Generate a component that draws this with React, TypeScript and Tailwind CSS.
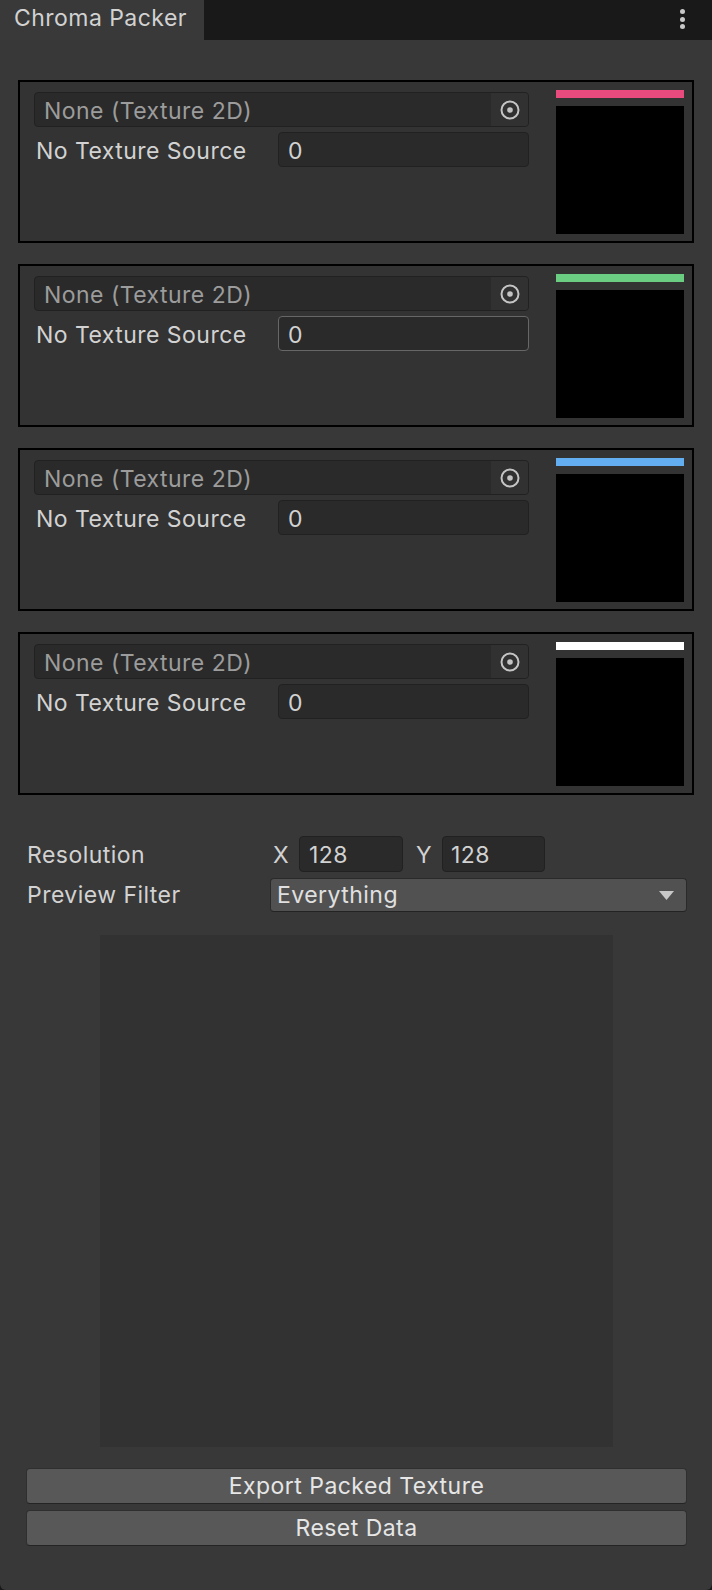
import React from 'react'

const CHANNELS = [
  { id: 'r', color: 'bg-[#e94b7f]', focused: false },
  { id: 'g', color: 'bg-[#6acd82]', focused: true },
  { id: 'b', color: 'bg-[#63aef0]', focused: false },
  { id: 'a', color: 'bg-white', focused: false },
]

const TXT = 'text-[23px] tracking-[0.02em]'

function PickerIcon() {
  return (
    <svg width="22" height="22" viewBox="0 0 22 22">
      <circle cx="11" cy="11" r="8.5" fill="none" stroke="#c4c4c4" strokeWidth="2" />
      <circle cx="11" cy="11" r="2.8" fill="#c4c4c4" />
    </svg>
  )
}

function ChannelCard({ color, focused }: { color: string; focused: boolean }) {
  return (
    <div className="flex h-[163px] border-2 border-black bg-[#333333]">
      <div className="flex-1 flex flex-col gap-[5px] pl-[14px] pt-[10px]">
        <div className="flex h-[35px] items-stretch rounded-[4px] border border-[#212121] bg-[#2a2a2a] overflow-hidden">
          <span className={'flex-1 flex items-center pl-[9px] pt-[3px] text-[#9c9c9c] ' + TXT}>None (Texture 2D)</span>
          <span className="w-[37px] flex items-center justify-center bg-[#313131]">
            <PickerIcon />
          </span>
        </div>
        <div className="flex h-[35px] items-center">
          <span className={'w-[244px] pl-[2px] pt-[3px] text-[#d2d2d2] ' + TXT}>No Texture Source</span>
          <div
            className={
              'flex-1 h-full flex items-center pl-[9px] pt-[3px] rounded-[4px] bg-[#2a2a2a] text-[#d2d2d2] border ' +
              TXT +
              ' ' +
              (focused ? 'border-[#676767]' : 'border-[#212121]')
            }
          >
            0
          </div>
        </div>
      </div>
      <div className="w-[128px] ml-[27px] mr-[8px] pt-[8px] flex flex-col gap-[8px]">
        <div className={'h-[8px] ' + color} />
        <div className="h-[128px] bg-black" />
      </div>
    </div>
  )
}

export default function App() {
  return (
    <div className="w-[712px] h-[1590px] bg-[#191919] flex flex-col font-['Inter','Noto_Sans',sans-serif]">
      <header className="h-[40px] flex items-stretch shrink-0">
        <div className={'w-[204px] bg-[#393939] flex items-center pl-[14px] pb-[3px] text-[#d2d2d2] ' + TXT}>Chroma Packer</div>
        <div className="flex-1" />
        <div className="w-[60px] flex flex-col items-center justify-center gap-[2.5px] pb-[2px]">
          <span className="w-[5px] h-[5px] rounded-full bg-[#c8c8c8]" />
          <span className="w-[5px] h-[5px] rounded-full bg-[#c8c8c8]" />
          <span className="w-[5px] h-[5px] rounded-full bg-[#c8c8c8]" />
        </div>
      </header>

      <main className="flex-1 bg-[#383838] rounded-b-[6px] flex flex-col">
        <div className="flex flex-col gap-[21px] mt-[40px] ml-[18px] mr-[18px]">
          {CHANNELS.map(ch => (
            <ChannelCard key={ch.id} color={ch.color} focused={ch.focused} />
          ))}
        </div>

        <div className="flex flex-col gap-[6px] mt-[41px] ml-[26px] mr-[25px]">
          <div className="flex h-[36px] items-center">
            <span className={'w-[244px] pl-[1px] pt-[2px] text-[#d2d2d2] ' + TXT}>Resolution</span>
            <span className={'w-[29px] pl-[3px] pt-[2px] text-[#d2d2d2] ' + TXT}>X</span>
            <div className={'w-[104px] h-full flex items-center pl-[9px] pt-[2px] rounded-[4px] border border-[#212121] bg-[#2a2a2a] text-[#d2d2d2] ' + TXT}>128</div>
            <span className={'w-[39px] pl-[13px] pt-[2px] text-[#d2d2d2] ' + TXT}>Y</span>
            <div className={'w-[103px] h-full flex items-center pl-[8px] pt-[2px] rounded-[4px] border border-[#212121] bg-[#2a2a2a] text-[#d2d2d2] ' + TXT}>128</div>
          </div>
          <div className="flex h-[34px] items-center">
            <span className={'w-[244px] pl-[1px] pt-[1px] text-[#d2d2d2] ' + TXT}>Preview Filter</span>
            <div className={'flex-1 h-full flex items-center justify-between pl-[6px] pr-[12px] rounded-[4px] border border-[#2a2a2a] border-b-[#232323] bg-[#515151] text-[#e0e0e0] ' + TXT}>
              <span>Everything</span>
              <svg width="15" height="9" viewBox="0 0 15 9">
                <polygon points="0,0 15,0 7.5,9" fill="#c8c8c8" />
              </svg>
            </div>
          </div>
        </div>

        <div className="mt-[23px] mx-auto w-[513px] h-[512px] bg-[#323232]" />

        <div className="flex flex-col gap-[6px] mt-[21px] ml-[26px] mr-[25px]">
          <button className={'h-[36px] rounded-[4px] border border-[#2f2f2f] border-b-[#242424] bg-[#585858] text-[#e6e6e6] ' + TXT}>
            Export Packed Texture
          </button>
          <button className={'h-[36px] rounded-[4px] border border-[#2f2f2f] border-b-[#242424] bg-[#585858] text-[#e6e6e6] ' + TXT}>
            Reset Data
          </button>
        </div>
      </main>
    </div>
  )
}
